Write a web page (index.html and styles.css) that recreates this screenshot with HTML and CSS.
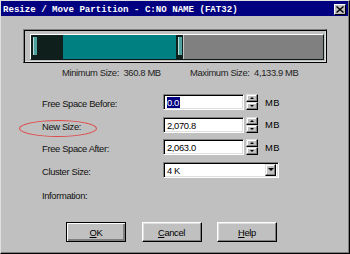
FILE: index.html
```html
<!DOCTYPE html>
<html lang="en">
<head>
    <meta charset="UTF-8">
    <title>Resize / Move Partition</title>
    <link rel="stylesheet" href="styles.css">
</head>
<body>
    <div class="dialog">
        <div class="titlebar">
            <span class="title">Resize / Move Partition - C:NO NAME (FAT32)</span>
            <span class="close">
                <svg width="8" height="7" viewBox="0 0 8 7"><path d="M0.5 0.5L7.5 6.5M7.5 0.5L0.5 6.5" stroke="#000" stroke-width="1.4"/></svg>
            </span>
        </div>

        <!-- partition map -->
        <div class="track-frame">
            <div class="track">
                <div class="seg seg-before"><span class="grip"></span></div>
                <div class="seg seg-part"></div>
                <div class="seg seg-handle"><span class="grip"></span></div>
                <div class="seg seg-after"></div>
            </div>
        </div>

        <div class="limits">
            <span class="limit-min">Minimum Size:&nbsp; 360.8 MB</span>
            <span>Maximum Size:&nbsp; 4,133.9 MB</span>
        </div>

        <div class="form">
            <label>Free Space Before:</label>
            <div class="field">
                <div class="input"><span class="selected">0.0</span></div>
                <div class="spin"><span class="spin-btn"><i class="up"></i></span><span class="spin-btn"><i class="down"></i></span></div>
                <span class="unit">MB</span>
            </div>

            <label>New Size:</label>
            <div class="field">
                <div class="input">2,070.8</div>
                <div class="spin"><span class="spin-btn"><i class="up"></i></span><span class="spin-btn"><i class="down"></i></span></div>
                <span class="unit">MB</span>
            </div>

            <label>Free Space After:</label>
            <div class="field">
                <div class="input">2,063.0</div>
                <div class="spin"><span class="spin-btn"><i class="up"></i></span><span class="spin-btn"><i class="down"></i></span></div>
                <span class="unit">MB</span>
            </div>

            <label>Cluster Size:</label>
            <div class="field">
                <div class="select">
                    <span>4 K</span>
                    <span class="drop"><i class="down"></i></span>
                </div>
            </div>

            <label class="info">Information:</label>
        </div>

        <div class="buttons">
            <button class="btn btn-default"><u>O</u>K</button>
            <button class="btn"><u>C</u>ancel</button>
            <button class="btn"><u>H</u>elp</button>
        </div>

        <span class="mark"></span>
    </div>
</body>
</html>
```

FILE: styles.css
```css
body {
    margin: 0;
    font-family: "Liberation Sans", Arial, sans-serif;
    font-size: 9.4px;
    letter-spacing: -0.35px;
    color: #000;
}
.dialog {
    position: relative;
    width: 350px;
    height: 254px;
    box-sizing: border-box;
    background: #c0c0c0;
    border: 1px solid;
    border-color: #dfdfdf #000 #000 #dfdfdf;
    box-shadow: inset -1px -1px #808080;
}
.titlebar {
    display: flex;
    align-items: center;
    height: 15px;
    margin-right: 1px;
    padding-left: 2px;
    background: #000080;
    color: #fff;
}
.title {
    font-family: "Liberation Mono", monospace;
    font-weight: bold;
    font-size: 9.1px;
    letter-spacing: 0;
    white-space: pre;
    padding-top: 2px;
}
.close {
    display: flex;
    align-items: center;
    justify-content: center;
    margin-left: auto;
    margin-right: 2px;
    margin-top: 2px;
    width: 12px;
    height: 11px;
    box-sizing: border-box;
    background: #c0c0c0;
    border: 1px solid;
    border-color: #fff #000 #000 #fff;
}

.track-frame {
    width: 304px;
    height: 34px;
    box-sizing: border-box;
    margin: 13px 0 0 22px;
    padding: 4px 2px 2px 6px;
    border: 1px solid;
    border-color: #808080 #000 #000 #808080;
    box-shadow: inset 1px 1px #000, inset -1px -1px #dfdfdf;
}
.track {
    display: flex;
    height: 26px;
    box-sizing: border-box;
    border: 1px solid;
    border-color: #fff #0c1a18 #0c1a18 #fff;
}
.seg {
    height: 100%;
}
.seg-before {
    width: 32px;
    background: #0f1f1c;
}
.seg-part {
    width: 113px;
    background: #008080;
}
.seg-handle {
    width: 8px;
    background: #0f1f1c;
    border-right: 1px solid #c8c8c8;
    box-sizing: border-box;
}
.seg-after {
    flex: 1;
    background: #808080;
}
.grip {
    display: block;
    width: 3px;
    height: 18px;
    margin: 2px 0 0 2px;
    background: #4fa39e;
    border-left: 1px solid #b6dcd8;
}

.limits {
    display: flex;
    margin-top: 4px;
    padding-left: 61px;
    line-height: 12px;
    color: #222;
}
.limit-min {
    width: 128px;
}

.form {
    display: grid;
    grid-template-columns: 121px auto;
    grid-auto-rows: 16px;
    row-gap: 6.5px;
    margin-top: 15px;
    padding-left: 41px;
}
.form label {
    align-self: center;
    padding-top: 3px;
    color: #111;
}
.form .info {
    padding-top: 6px;
}
.field {
    display: flex;
    align-items: center;
}
.input,
.select {
    height: 16px;
    box-sizing: border-box;
    background: #fff;
    border: 1px solid;
    border-color: #808080 #fff #fff #808080;
    box-shadow: inset 1px 1px #000, inset -1px -1px #dfdfdf;
    padding: 2px 0 0 3px;
    line-height: 11px;
}
.input {
    width: 81px;
}
.selected {
    display: inline-block;
    background: #000080;
    color: #fff;
    padding-right: 1px;
}
.spin {
    display: flex;
    flex-direction: column;
    width: 12px;
    height: 16px;
    margin-left: 2px;
}
.spin-btn,
.drop {
    display: flex;
    align-items: center;
    justify-content: center;
    box-sizing: border-box;
    background: #c0c0c0;
    border: 1px solid;
    border-color: #dfdfdf #000 #000 #dfdfdf;
    box-shadow: inset -1px -1px #808080, inset 1px 1px #fff;
}
.spin-btn {
    height: 8px;
}
.up {
    width: 0;
    height: 0;
    border-left: 2px solid transparent;
    border-right: 2px solid transparent;
    border-bottom: 2px solid #000;
}
.down {
    width: 0;
    height: 0;
    border-left: 2px solid transparent;
    border-right: 2px solid transparent;
    border-top: 2px solid #000;
}
.drop .down {
    border-left-width: 3px;
    border-right-width: 3px;
    border-top-width: 3px;
}
.unit {
    margin-left: 7px;
    letter-spacing: 0.4px;
}
.select {
    display: flex;
    justify-content: space-between;
    width: 116px;
    padding-right: 2px;
}
.drop {
    width: 11px;
    height: 12px;
    margin-top: -1px;
}

.buttons {
    display: flex;
    gap: 15.5px;
    margin-top: 22px;
    padding-left: 65px;
}
.btn {
    width: 60px;
    height: 20px;
    box-sizing: border-box;
    padding: 0;
    font-family: inherit;
    font-size: 9.4px;
    letter-spacing: -0.35px;
    color: #000;
    background: #c0c0c0;
    border: 1px solid;
    border-color: #fff #000 #000 #fff;
    box-shadow: inset -1px -1px #808080, inset 1px 1px #dfdfdf;
}
.btn-default {
    border-color: #000;
    box-shadow: inset 1px 1px #fff, inset -2px -2px #808080;
}

.mark {
    position: absolute;
    left: 18px;
    top: 119px;
    width: 78px;
    height: 17px;
    box-sizing: border-box;
    border: 1px solid #e04848;
    border-radius: 50%;
}
```
